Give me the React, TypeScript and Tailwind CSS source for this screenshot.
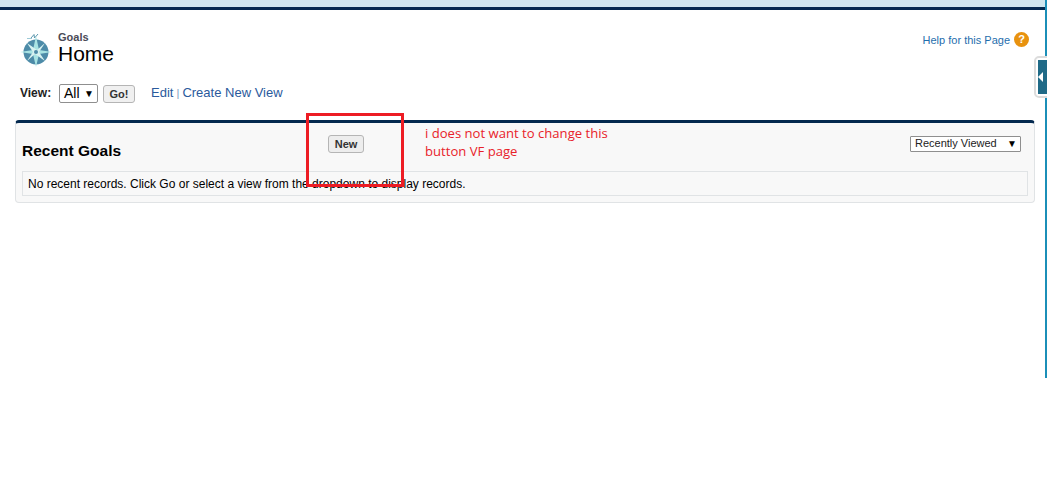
export default function App() {
  return (
    <div className="relative w-[1047px] h-[501px] overflow-hidden bg-white font-['Liberation_Sans',Arial,sans-serif] text-black">
      <div className="h-[7px] bg-[#cfe6ee]" />
      <div className="h-[3px] bg-[#04294f]" />

      <header className="flex justify-between pl-[20px] pr-[18px] pt-[20px]">
        <div className="flex items-start gap-[6px]">
          <svg width="32" height="36" viewBox="0 0 32 36" className="mt-[3px]">
            <path d="M11 5 L14 1.5 L14.5 5 L18 1" fill="none" stroke="#5a96ad" strokeWidth="1" />
            <line x1="7" y1="5.5" x2="12" y2="5.5" stroke="#9cc9d6" strokeWidth="1" />
            <circle cx="16" cy="19" r="12.5" fill="#4d8ba8" />
            <path d="M0 19 L13 17 L16 3 L19 17 L32 19 L19 21 L16 34 L13 21 Z" fill="#a8e3e3" />
            <path d="M7 10 L17 17 L25 10 L19 19 L25 28 L15 21 L7 28 L13 19 Z" fill="#d8f2f0" />
            <circle cx="16" cy="19" r="2" fill="#4d8ba8" />
          </svg>
          <div className="pt-[1px]">
            <div className="text-[11px] leading-[12px] font-bold text-[#4a4a56]">Goals</div>
            <div className="text-[21px] leading-[21px]">Home</div>
          </div>
        </div>
        <div className="flex items-center gap-[4px] h-[16px] mt-[1px]">
          <a className="text-[11px] text-[#1f6ead] pt-[2px]">Help for this Page</a>
          <span className="flex w-[15px] h-[15px] items-center justify-center rounded-full bg-[#e8920f] text-[11px] font-bold leading-none text-white">?</span>
        </div>
      </header>

      <div className="flex items-center pl-[20px] mt-[15px] h-[20px]">
        <span className="text-[12px] font-bold text-[#222] w-[39px] pb-[2px]">View:</span>
        <div className="self-start flex items-center justify-between w-[39px] h-[19px] pl-[4px] pr-[3px] bg-white border border-[#8f8f8f] rounded-[2px] text-[14px]">
          <span>All</span>
          <span className="text-[10px]">▼</span>
        </div>
        <button className="self-start mt-[1px] ml-[5px] w-[32px] h-[18px] border border-[#b5b5b5] rounded-[3px] bg-[#f0f0f0] text-[11px] font-bold text-[#333]">Go!</button>
        <div className="ml-[16px] text-[13px] text-[#2a5a9c] pb-[2px]">
          <a>Edit</a>
          <span className="text-[#7a9cc0] text-[11px]"> | </span>
          <a>Create New View</a>
        </div>
      </div>

      <section className="ml-[15px] mt-[16px] w-[1020px] h-[83px] border border-t-[3px] border-[#e0e3e5] border-t-[#04294f] rounded-[4px] bg-[#f8f8f8] px-[6px]">
        <div className="relative flex items-center justify-between h-[48px]">
          <h2 className="text-[15.5px] font-bold pt-[7px]">Recent Goals</h2>
          <button className="absolute left-[306px] top-[12px] w-[36px] h-[18px] border border-[#b5b5b5] rounded-[3px] bg-[#ededed] text-[11px] font-bold text-[#333]">New</button>
          <div className="flex items-center justify-between w-[111px] h-[16px] mr-[7px] mb-[7px] pl-[4px] pr-[3px] bg-white border border-[#8f8f8f] rounded-[1px] text-[11px] text-[#222]">
            <span>Recently Viewed</span>
            <span className="text-[10px] text-black">▼</span>
          </div>
        </div>
        <div className="flex items-center h-[25px] border border-[#e0e3e5] px-[5px] text-[12px]">
          No recent records. Click Go or select a view from the dropdown to display records.
        </div>
      </section>

      <div className="absolute right-0 top-0 w-[2px] h-[378px] bg-[#1b8fb8]" />
      <div className="absolute left-[1034px] top-[56px] w-[20px] h-[42px] bg-white border-2 border-[#dcdcdc] rounded-[5px] p-[2px]">
        <div className="flex items-center h-full bg-[#1f6a87]">
          <div className="w-0 h-0 border-y-[5px] border-y-transparent border-r-[5px] border-r-white" />
        </div>
      </div>

      <div className="absolute left-[306px] top-[113px] w-[98px] h-[74px] border-[3px] border-[#ed1c24]" />
      <p className="absolute left-[425px] top-[124px] w-[220px] font-['Open_Sans',sans-serif] text-[13.1px] leading-[18px] text-[#e8222a]">
        i does not want to change this<br />button VF page
      </p>
    </div>
  );
}
